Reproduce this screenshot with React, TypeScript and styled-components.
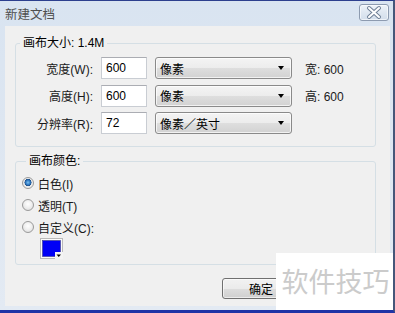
import styled, { createGlobalStyle } from "styled-components";

const GlobalStyle = createGlobalStyle`
  html, body {
    margin: 0;
    padding: 0;
    background: #ffffff;
  }
  * {
    box-sizing: border-box;
  }
`;

const FONT = `"Liberation Sans", "Noto Sans CJK SC", sans-serif`;

const sizeRows = [
  { label: "宽度(W):", value: "600", unit: "像素", info: "宽: 600" },
  { label: "高度(H):", value: "600", unit: "像素", info: "高: 600" },
  { label: "分辨率(R):", value: "72", unit: "像素／英寸", info: "" },
];

const colorOptions = [
  { label: "白色(I)", checked: true },
  { label: "透明(T)", checked: false },
  { label: "自定义(C):", checked: false },
];

export default function App() {
  return (
    <>
      <GlobalStyle />
      <Window>
        <TitleBar>
          <Title>新建文档</Title>
          <CloseButton>
            <svg width="28" height="15" viewBox="0 0 28 15">
              <path d="M9 3 L19 12 M19 3 L9 12" stroke="#6f7f95" strokeWidth="4" strokeLinecap="round" />
              <path d="M9 3 L19 12 M19 3 L9 12" stroke="#ffffff" strokeWidth="2" strokeLinecap="round" />
            </svg>
          </CloseButton>
        </TitleBar>
        <Client>
          <Group>
            <Legend>画布大小: 1.4M</Legend>
            <SizeGrid>
              {sizeRows.map((row) => (
                <SizeRow key={row.label}>
                  <FieldLabel>{row.label}</FieldLabel>
                  <TextBox>{row.value}</TextBox>
                  <Dropdown>
                    <span>{row.unit}</span>
                    <Arrow />
                  </Dropdown>
                  <Info>{row.info}</Info>
                </SizeRow>
              ))}
            </SizeGrid>
          </Group>

          <ColorGroup>
            <Legend>画布颜色:</Legend>
            {colorOptions.map((opt) => (
              <RadioRow key={opt.label}>
                <Radio $checked={opt.checked} />
                <span>{opt.label}</span>
              </RadioRow>
            ))}
            <Swatch>
              <svg width="23" height="21" viewBox="0 0 23 21">
                <rect x="0.5" y="0.5" width="22" height="20" fill="#fafafa" stroke="#b9b9b9" />
                <rect x="2.5" y="2.5" width="18" height="16" fill="#0000f6" stroke="#3a3a8a" strokeWidth="0.6" />
                <rect x="15" y="14" width="8" height="7" fill="#f4f4f4" />
                <path d="M16.5 16.5 L21 16.5 L18.75 19 Z" fill="#000" />
              </svg>
            </Swatch>
          </ColorGroup>

          <ButtonRow>
            <PushButton>确定</PushButton>
          </ButtonRow>
        </Client>
        <Watermark>软件技巧</Watermark>
      </Window>
    </>
  );
}

const Window = styled.div`
  position: relative;
  width: 395px;
  height: 313px;
  display: flex;
  flex-direction: column;
  background: linear-gradient(180deg, #d9e4f1 0%, #dde6f1 40%, #e3eaf3 100%);
  border-top: 1px solid #2c3f8e;
  border-right: 2px solid #46577a;
  border-bottom: 3px solid #1f34a6;
  font-family: ${FONT};
  font-size: 12px;
  color: #000;
  overflow: hidden;
`;

const TitleBar = styled.div`
  height: 25px;
  flex: none;
  display: flex;
  align-items: center;
  justify-content: space-between;
  padding: 0 4px 0 5px;
`;

const Title = styled.div`
  font-family: "Noto Sans CJK SC", sans-serif;
  font-size: 12.5px;
  color: #4f4f4f;
  margin-top: -1px;
`;

const CloseButton = styled.div`
  width: 30px;
  height: 17px;
  margin-top: -3px;
  display: flex;
  align-items: center;
  justify-content: center;
  border: 1px solid #8d9bb0;
  border-radius: 3px;
  background: linear-gradient(180deg, #eef3f9 0%, #dfe7f1 50%, #d3deeb 100%);
  box-shadow: inset 0 0 0 1px rgba(255, 255, 255, 0.6);
`;

const Client = styled.div`
  flex: 1;
  margin: 0 3px 4px 5px;
  background: #f0f0f0;
  padding: 10px 0 0 10px;
  display: flex;
  flex-direction: column;
`;

const Group = styled.fieldset`
  width: 361px;
  margin: 0;
  padding: 7px 0 12px 0;
  border: 1px solid #d5dfe5;
  border-radius: 3px;
`;

const ColorGroup = styled(Group)`
  margin-top: 7px;
  padding: 4px 0 5px 6px;
`;

const Legend = styled.legend`
  margin-left: 4px;
  padding: 0 3px;
  line-height: 14px;
  font-size: 12px;
  color: #000;
`;

const SizeGrid = styled.div`
  display: flex;
  flex-direction: column;
  gap: 5.5px;
`;

const SizeRow = styled.div`
  display: grid;
  grid-template-columns: 77px 46px 137px auto;
  column-gap: 8px;
  align-items: center;
  height: 22px;
`;

const FieldLabel = styled.div`
  text-align: right;
  color: #1a1a1a;
`;

const TextBox = styled.div`
  height: 22px;
  line-height: 20px;
  padding-left: 4px;
  background: #ffffff;
  border: 1px solid #c9cdd3;
  border-top-color: #abadb3;
`;

const Dropdown = styled.div`
  height: 22px;
  display: flex;
  align-items: center;
  justify-content: space-between;
  padding: 0 7px 0 4px;
  border: 1px solid #8a8a8a;
  border-radius: 3px;
  background: linear-gradient(180deg, #f4f4f4 0%, #ececec 50%, #dedede 51%, #d2d2d2 100%);
  box-shadow: inset 0 0 0 1px rgba(255, 255, 255, 0.7);
`;

const Arrow = styled.span`
  width: 0;
  height: 0;
  border-left: 3.5px solid transparent;
  border-right: 3.5px solid transparent;
  border-top: 4px solid #000;
`;

const Info = styled.div`
  padding-left: 5px;
  color: #1a1a1a;
`;

const RadioRow = styled.div`
  height: 22px;
  display: flex;
  align-items: center;
  gap: 4px;
  color: #1a1a1a;
`;

const Radio = styled.span<{ $checked: boolean }>`
  width: 12px;
  height: 12px;
  border-radius: 50%;
  border: 1px solid #9a9a9a;
  background: ${(p) =>
    p.$checked
      ? "radial-gradient(circle at 50% 45%, #7ec1f0 0%, #2f7ac3 30%, #1d4f8a 45%, #e9e9e9 50%, #f6f6f6 100%)"
      : "radial-gradient(circle at 50% 40%, #ffffff 0%, #f0f0f0 45%, #d8d8d8 100%)"};
`;

const Swatch = styled.div`
  margin-left: 18px;
  height: 21px;
  display: flex;
`;

const ButtonRow = styled.div`
  width: 361px;
  margin-top: 13px;
  padding-right: 80px;
  display: flex;
  justify-content: flex-end;
`;

const PushButton = styled.div`
  width: 74px;
  height: 21px;
  display: flex;
  align-items: center;
  justify-content: center;
  padding-left: 4px;
  border: 1px solid #707070;
  border-radius: 3px;
  background: linear-gradient(180deg, #f2f2f2 0%, #ebebeb 50%, #dddddd 51%, #cfcfcf 100%);
  box-shadow: inset 0 0 0 1px rgba(255, 255, 255, 0.6);
  color: #000;
`;

const Watermark = styled.div`
  position: absolute;
  right: -2px;
  bottom: -3px;
  width: 119px;
  height: 60px;
  background: #ffffff;
  display: flex;
  align-items: center;
  justify-content: center;
  padding-bottom: 5px;
  font-family: "Noto Sans CJK SC", sans-serif;
  font-size: 27px;
  color: #cbcbcb;
`;
